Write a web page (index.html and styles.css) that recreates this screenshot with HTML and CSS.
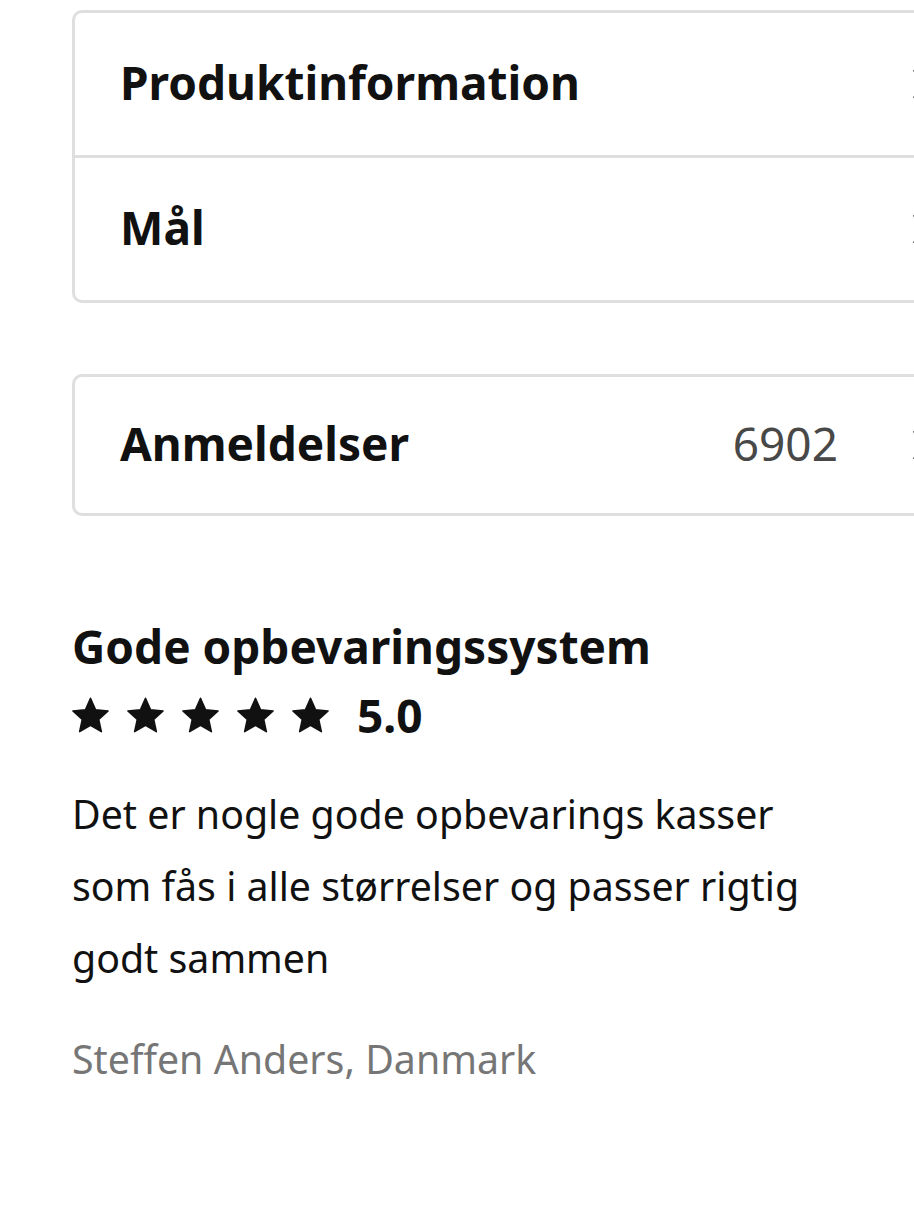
FILE: index.html
```html
<!DOCTYPE html>
<html lang="da">
<head>
<meta charset="utf-8">
<title>Produkt</title>
<link rel="stylesheet" href="styles.css">
</head>
<body>
<div class="page">
  <div class="card">
    <div class="row">
      <span class="row-title">Produktinformation</span>
      <svg class="chev" viewBox="0 0 16 32" width="16" height="32"><path d="M2 2 L14 16 L2 30" fill="none" stroke="#111" stroke-width="2.5"/></svg>
    </div>
    <div class="row">
      <span class="row-title">Mål</span>
      <svg class="chev" viewBox="0 0 16 32" width="16" height="32"><path d="M2 2 L14 16 L2 30" fill="none" stroke="#111" stroke-width="2.5"/></svg>
    </div>
  </div>

  <div class="card card-reviews">
    <div class="row">
      <span class="row-title">Anmeldelser</span>
      <span class="count">6902</span>
      <svg class="chev" viewBox="0 0 16 32" width="16" height="32"><path d="M2 2 L14 16 L2 30" fill="none" stroke="#111" stroke-width="2.5"/></svg>
    </div>
  </div>

  <div class="review">
    <h2 class="review-title">Gode opbevaringssystem</h2>
    <div class="rating">
      <div class="stars">
        <svg class="star" viewBox="0 0 24 24"><path d="M12 0.8 L15.29 8.27 L23.41 9.09 L17.33 14.53 L19.05 22.51 L12 18.4 L4.95 22.51 L6.67 14.53 L0.59 9.09 L8.71 8.27 Z"/></svg>
        <svg class="star" viewBox="0 0 24 24"><path d="M12 0.8 L15.29 8.27 L23.41 9.09 L17.33 14.53 L19.05 22.51 L12 18.4 L4.95 22.51 L6.67 14.53 L0.59 9.09 L8.71 8.27 Z"/></svg>
        <svg class="star" viewBox="0 0 24 24"><path d="M12 0.8 L15.29 8.27 L23.41 9.09 L17.33 14.53 L19.05 22.51 L12 18.4 L4.95 22.51 L6.67 14.53 L0.59 9.09 L8.71 8.27 Z"/></svg>
        <svg class="star" viewBox="0 0 24 24"><path d="M12 0.8 L15.29 8.27 L23.41 9.09 L17.33 14.53 L19.05 22.51 L12 18.4 L4.95 22.51 L6.67 14.53 L0.59 9.09 L8.71 8.27 Z"/></svg>
        <svg class="star" viewBox="0 0 24 24"><path d="M12 0.8 L15.29 8.27 L23.41 9.09 L17.33 14.53 L19.05 22.51 L12 18.4 L4.95 22.51 L6.67 14.53 L0.59 9.09 L8.71 8.27 Z"/></svg>
      </div>
      <span class="score">5.0</span>
    </div>
    <p class="review-text">Det er nogle gode opbevarings kasser som fås i alle størrelser og passer rigtig godt sammen</p>
    <p class="author">Steffen Anders, Danmark</p>
  </div>
</div>
</body>
</html>
```

FILE: styles.css
```css
html, body {
  margin: 0;
  padding: 0;
  background: #fff;
  overflow: hidden;
}
body {
  width: 914px;
  height: 1218px;
  font-family: "Noto Sans", "Open Sans", sans-serif;
  color: #111;
}
.page {
  padding: 10px 0 0 72px;
  width: 907px;
}
.card {
  border: 3px solid #dfdfdf;
  border-radius: 10px;
}
.row {
  display: flex;
  align-items: center;
  height: 142px;
  padding: 0 48px 0 45px;
}
.row + .row {
  border-top: 3px solid #dfdfdf;
}
.row-title {
  font-size: 46px;
  font-weight: 700;
  flex: 1;
  margin-top: -4px;
}
.count {
  font-size: 46px;
  color: #484848;
  margin-right: 74px;
  margin-top: -4px;
}
.chev {
  flex: none;
}
.card-reviews {
  margin-top: 71px;
}
.card-reviews .row {
  height: 136px;
}
.review {
  width: 760px;
  padding-top: 100px;
}
.review-title {
  margin: 0;
  font-size: 46px;
  font-weight: 700;
  line-height: 60px;
}
.rating {
  display: flex;
  align-items: center;
  margin-top: 8px;
}
.stars {
  display: flex;
  gap: 18px;
}
.star {
  width: 37px;
  height: 37px;
  fill: #111;
  stroke: #111;
  stroke-width: 1;
  stroke-linejoin: round;
}
.score {
  font-size: 46px;
  font-weight: 700;
  margin-left: 28px;
}
.review-text {
  margin: 32px 0 0;
  font-size: 39.3px;
  line-height: 72px;
}
.author {
  margin: 38px 0 0;
  font-size: 39.3px;
  color: #767676;
}
```
